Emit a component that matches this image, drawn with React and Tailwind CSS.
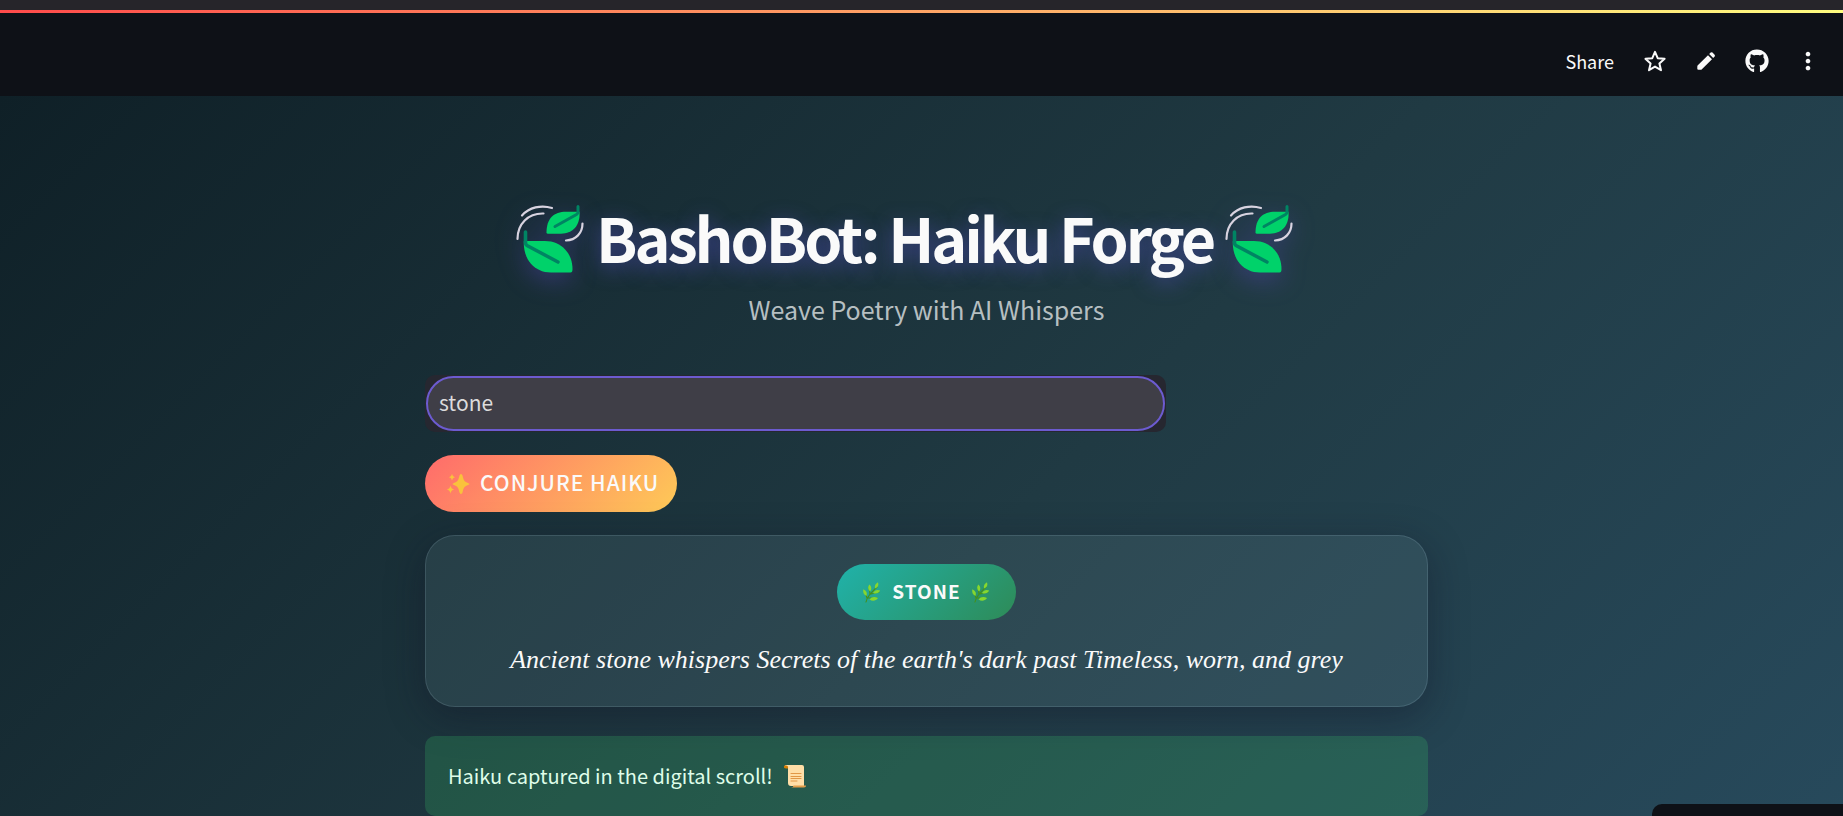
import { FaGithub } from "react-icons/fa";
import { MdMoreVert } from "react-icons/md";

function Star() {
  return (
    <svg viewBox="0 0 28 28" className="size-7" fill="none" stroke="currentColor" strokeWidth="2" strokeLinejoin="round" aria-hidden="true">
      <path d="M14 4.800L16.700 11.200L23.600 11.800L18.400 16.400L20 23.200L14 19.600L8 23.200L9.600 16.400L4.400 11.800L11.300 11.200Z" />
    </svg>
  );
}

function Pencil() {
  return (
    <svg viewBox="0 0 28 28" className="size-7" fill="currentColor" aria-hidden="true">
      <path d="M16 8.200L20 12.200L9.900 22.300Q9.400 22.800 8.700 22.800H6.300Q5.300 22.800 5.300 21.800V19.500Q5.300 18.800 5.800 18.300Z" />
      <path d="M17.200 7L18.700 5.600Q19.600 4.800 20.500 5.600L22.600 7.700Q23.400 8.600 22.600 9.500L21.200 11Z" />
    </svg>
  );
}

function WindLeaves() {
  return (
    <svg viewBox="0 0 68 68" className="w-[68px] h-[68px] shrink-0 overflow-visible drop-shadow-[0_8px_12px_rgba(90,70,190,0.4)]" fill="none" strokeLinecap="round" aria-hidden="true">
      <g stroke="#d8d3e0" strokeWidth="2.2">
        <path d="M6 10.500C13 2.500 25-.5 36 3" />
        <path d="M1.500 34C1.500 19 12 8 27.500 8.500" />
        <path d="M66.500 18.500C66.500 28 60 35 50 35.500" />
      </g>
      <path d="M30.500 28C30.500 13 38 6.800 50 6.800H63.500C64.500 20 57 28.700 45 28.700H31.500Z" fill="#00d26a" />
      <path d="M7.800 36H29C46 36 56.500 49 56.500 64Q56.500 67.500 54.500 67.500H35C18 67.500 7 54 7.800 36Z" fill="#00d26a" />
      <g stroke="#008463" strokeWidth="3">
        <path d="M62 1.500V7Q62 8.500 60.500 9.500L39 21.500" />
        <path d="M9.500 27V38Q9.500 39.500 11 40.500L42 57" strokeWidth="3.600" />
      </g>
    </svg>
  );
}

function Sparkles() {
  return (
    <svg viewBox="0 0 24 24" className="size-6 shrink-0" fill="#f9c23c" aria-hidden="true">
      <path d="M15 2Q16 2 16.500 3.500C17.600 8 18 9.500 22.500 11.200Q24.500 12 22.500 12.800C18 14.500 17.600 16 16.500 20.500Q15 23.500 13.500 20.500C12.400 16 12 14.500 7.500 12.800Q5.500 12 7.500 11.200C12 9.500 12.400 8 13.500 3.500Q14 2 15 2Z" />
      <path d="M6 2Q6.500 4.700 9 5.200Q6.500 5.800 6 8.500Q5.500 5.800 3 5.200Q5.500 4.700 6 2Z" />
      <path d="M4.500 13.500Q5.100 16.800 8.200 17.500Q5.100 18.200 4.500 21.500Q3.900 18.200 .8 17.500Q3.900 16.800 4.500 13.500Z" />
    </svg>
  );
}

function Herb() {
  return (
    <svg viewBox="0 0 20 22" className="w-5 h-[22px] shrink-0" aria-hidden="true">
      <path d="M4 21C5 16 8 13 15 6M5 17L3 11M8 13L7 6M6 17H15M9 13L17 11" fill="none" stroke="#44911b" strokeWidth="1.2" strokeLinecap="round" />
      <g fill="#86d72f">
        <path d="M4.500 15C1.500 13.500.8 11 1.300 8.200C4.500 9.500 5.500 12 4.500 15Z" />
        <path d="M8 10.500C5.500 8 5.700 5.500 7.500 3.500C9.800 5.800 9.900 8.500 8 10.500Z" />
        <path d="M13 7.500C12.300 4.800 13.500 2.500 16 1.200C17 4.200 16 6.500 13 7.500Z" />
        <path d="M11 12C12.500 9 15.500 8.200 18.200 9.500C16.800 12.300 14 13.200 11 12Z" />
        <path d="M7.500 18.500C9.500 15.500 13 15.300 16 17C14 20 10.500 20.700 7.500 18.500Z" />
      </g>
    </svg>
  );
}

function Scroll() {
  return (
    <svg viewBox="0 0 24 24" className="size-6 shrink-0" aria-hidden="true">
      <path d="M3.500 1H19Q21 1 21 3V22H8Q5 22 5 19V4H2Q.8 1 3.500 1Z" fill="#ffdea7" />
      <path d="M1 2Q.5 4.500 3 4.500H5Q5.500 1.500 3 1.500Q1.500 1.200 1 2Z" fill="#d67d00" />
      <path d="M8 23.500Q10.500 23.500 10.500 21.500H23Q23.300 23.500 21 23.500Z" fill="#e39d4b" />
      <path d="M8 9.500H18M8 12.500H18M8 14.500H18M8 17H14" stroke="#e19747" strokeWidth="1" fill="none" strokeLinecap="round" />
    </svg>
  );
}

export default function App() {
  return (
    <div className="flex flex-col h-screen overflow-hidden bg-[#0e1117] text-[#fafafa] font-['Noto_Sans_CJK_SC',sans-serif]">
      <div className="h-[10px] shrink-0 bg-[#26252a]" />
      <div className="h-[3px] shrink-0 bg-[linear-gradient(90deg,#ff4b4b,#fffd80)]" />
      <header className="h-[83px] shrink-0 flex items-center justify-end gap-[23px] pr-[21px] pt-3">
        <button type="button" className="mr-1 text-lg leading-6">Share</button>
        <button type="button" aria-label="Favorite"><Star /></button>
        <button type="button" aria-label="Edit source"><Pencil /></button>
        <a href="#github" aria-label="View on GitHub" className="size-7 flex items-center justify-center"><FaGithub className="size-6" /></a>
        <button type="button" aria-label="More options"><MdMoreVert className="size-7" /></button>
      </header>
      <main className="grow pl-[10px] bg-[linear-gradient(135deg,#0f2027_0%,#203a43_56%,#2a5066_118%)]">
        <div className="max-w-[1003px] mx-auto flex flex-col items-start pt-[103px]">
          <h1 className="self-center flex items-center gap-3 h-20 pr-11 text-[61px] leading-none font-bold tracking-tighter [text-shadow:0_5px_20px_rgba(90,80,200,0.55)]">
            <WindLeaves />
            <span className="pb-[6px]">BashoBot: Haiku Forge</span>
            <WindLeaves />
          </h1>
          <p className="self-center mt-3 text-[25px] leading-9 text-[#b6bfc1]">Weave Poetry with AI Whispers</p>
          <div className="mt-12 w-[741px] max-w-full h-[57px] p-px rounded-[10px] bg-[#262730]">
            <input type="text" aria-label="Haiku theme" defaultValue="stone" className="w-full h-full px-[11px] pb-[3px] rounded-full border-2 border-[#6c5bd0] bg-[#3f3e47] text-[#dcdbdc] text-[21px] leading-8 outline-none" />
          </div>
          <button type="button" className="mt-[23px] h-[57px] pl-[21px] pr-[18px] flex items-center gap-[10px] rounded-full bg-[linear-gradient(135deg,#ff6b6b,#feca57)] text-[21px] font-medium tracking-[1px]">
            <Sparkles />
            <span className="pb-[2px]">CONJURE HAIKU</span>
          </button>
          <section className="mt-[23px] w-full h-[172px] pt-7 flex flex-col items-center rounded-[30px] border border-[#d0f0ff]/13 bg-[#d0f0ff]/8 shadow-[0_10px_38px_rgba(18,18,38,0.4)]">
            <h2 className="h-14 px-[25px] flex items-center gap-[10px] rounded-full bg-[linear-gradient(135deg,#20b2aa,#2e8b57)] text-[19px] font-bold tracking-[1px]">
              <Herb />
              <span className="pb-[2px]">STONE</span>
              <Herb />
            </h2>
            <p className="mt-5 text-[26px] leading-10 italic font-['Georgia','Liberation_Serif',serif]">
              Ancient stone whispers Secrets of the earth's dark past Timeless, worn, and grey
            </p>
          </section>
          <div role="status" className="mt-[29px] w-full h-[80px] px-[23px] flex items-center gap-[10px] rounded-[10px] bg-[#3dd56d]/20 text-xl text-[#dffde9]">
            Haiku captured in the digital scroll!
            <Scroll />
          </div>
        </div>
      </main>
      <div className="fixed right-0 bottom-0 w-[191px] h-3 rounded-tl-[10px] bg-[#0e1117]" />
    </div>
  );
}
